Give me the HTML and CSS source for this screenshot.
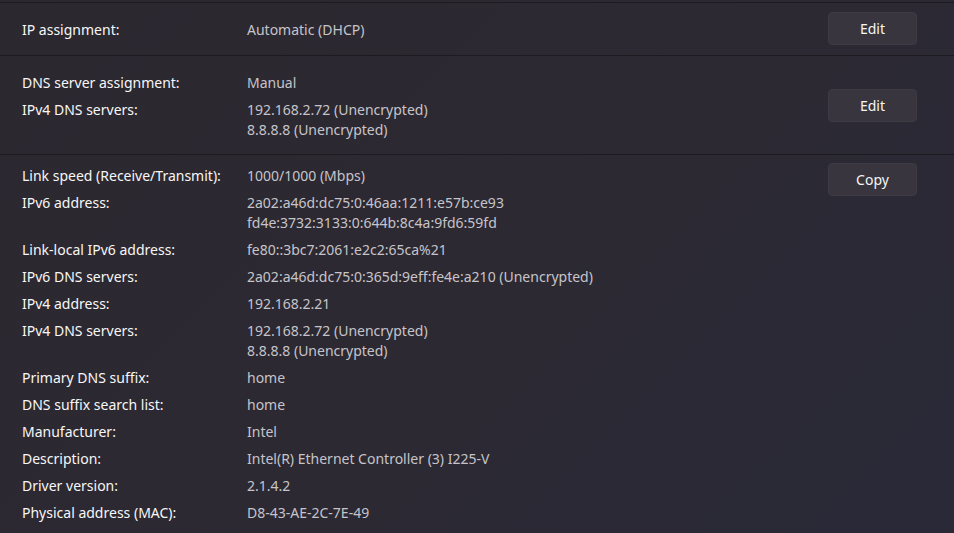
FILE: index.html
```html
<!DOCTYPE html>
<html>
<head>
<meta charset="utf-8">
<link rel="stylesheet" href="styles.css">
</head>
<body>
<div class="page">
  <div class="section section-first">
    <div class="fields">
      <div class="field"><span class="label">IP assignment:</span><span class="value">Automatic (DHCP)</span></div>
    </div>
    <button class="btn">Edit</button>
  </div>
  <div class="section section-mid">
    <div class="fields">
      <div class="field"><span class="label">DNS server assignment:</span><span class="value">Manual</span></div>
      <div class="field"><span class="label">IPv4 DNS servers:</span><span class="value">192.168.2.72 (Unencrypted)<br>8.8.8.8 (Unencrypted)</span></div>
    </div>
    <button class="btn">Edit</button>
  </div>
  <div class="section section-top">
    <div class="fields">
      <div class="field"><span class="label">Link speed (Receive/Transmit):</span><span class="value">1000/1000 (Mbps)</span></div>
      <div class="field"><span class="label">IPv6 address:</span><span class="value">2a02:a46d:dc75:0:46aa:1211:e57b:ce93<br>fd4e:3732:3133:0:644b:8c4a:9fd6:59fd</span></div>
      <div class="field"><span class="label">Link-local IPv6 address:</span><span class="value">fe80::3bc7:2061:e2c2:65ca%21</span></div>
      <div class="field"><span class="label">IPv6 DNS servers:</span><span class="value">2a02:a46d:dc75:0:365d:9eff:fe4e:a210 (Unencrypted)</span></div>
      <div class="field"><span class="label">IPv4 address:</span><span class="value">192.168.2.21</span></div>
      <div class="field"><span class="label">IPv4 DNS servers:</span><span class="value">192.168.2.72 (Unencrypted)<br>8.8.8.8 (Unencrypted)</span></div>
      <div class="field"><span class="label">Primary DNS suffix:</span><span class="value">home</span></div>
      <div class="field"><span class="label">DNS suffix search list:</span><span class="value">home</span></div>
      <div class="field"><span class="label">Manufacturer:</span><span class="value">Intel</span></div>
      <div class="field"><span class="label">Description:</span><span class="value">Intel(R) Ethernet Controller (3) I225-V</span></div>
      <div class="field"><span class="label">Driver version:</span><span class="value">2.1.4.2</span></div>
      <div class="field"><span class="label">Physical address (MAC):</span><span class="value">D8-43-AE-2C-7E-49</span></div>
    </div>
    <button class="btn">Copy</button>
  </div>
</div>
</body>
</html>
```

FILE: styles.css
```css
html, body {
  margin: 0;
  padding: 0;
  height: 100%;
  overflow: hidden;
}
body {
  background: linear-gradient(135deg, #2c2830 0%, #2c2932 50%, #2a2938 100%);
  font-family: "Noto Sans", "Open Sans", sans-serif;
  font-size: 14px;
  color: #f2f2f2;
}
.page {
  padding-top: 2px;
}
.section {
  display: flex;
  align-items: center;
  padding: 16px 37px 15px 22px;
  border-top: 1px solid #1d1b20;
}
.section-first {
  padding-top: 9px;
  padding-bottom: 10px;
}
.section-top {
  align-items: flex-start;
  padding-top: 10px;
}
.fields {
  flex: 1;
  display: flex;
  flex-direction: column;
  gap: 7px;
  margin-top: 1px;
  margin-bottom: -1px;
}
.field {
  display: grid;
  grid-template-columns: 225px 1fr;
  line-height: 20px;
}
.label {
  color: #f7f7f7;
}
.value {
  color: #c6c4ca;
}
.btn {
  width: 89px;
  height: 33px;
  border: 1px solid #3d3a43;
  border-radius: 4px;
  background: #38353e;
  color: #f5f5f5;
  font-family: inherit;
  font-size: 14px;
  padding: 0;
}
.section-top .btn {
  margin-top: -2px;
}
```
